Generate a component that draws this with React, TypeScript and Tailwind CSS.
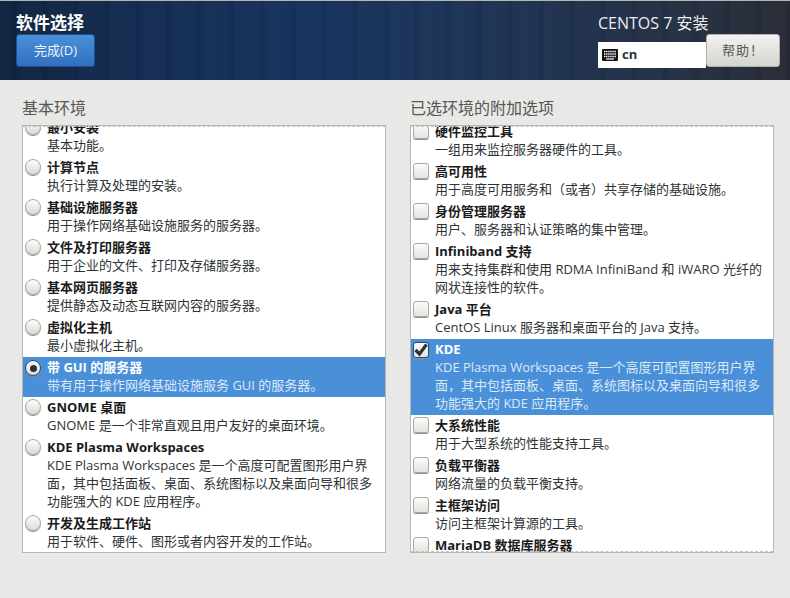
const font = { fontFamily: '"Open Sans", "Noto Sans CJK SC", sans-serif' };

type Item = { title: string; desc: string[]; selected?: boolean };

const environments: Item[] = [
  { title: '最小安装', desc: ['基本功能。'] },
  { title: '计算节点', desc: ['执行计算及处理的安装。'] },
  { title: '基础设施服务器', desc: ['用于操作网络基础设施服务的服务器。'] },
  { title: '文件及打印服务器', desc: ['用于企业的文件、打印及存储服务器。'] },
  { title: '基本网页服务器', desc: ['提供静态及动态互联网内容的服务器。'] },
  { title: '虚拟化主机', desc: ['最小虚拟化主机。'] },
  { title: '带 GUI 的服务器', desc: ['带有用于操作网络基础设施服务 GUI 的服务器。'], selected: true },
  { title: 'GNOME 桌面', desc: ['GNOME 是一个非常直观且用户友好的桌面环境。'] },
  {
    title: 'KDE Plasma Workspaces',
    desc: ['KDE Plasma Workspaces 是一个高度可配置图形用户界', '面，其中包括面板、桌面、系统图标以及桌面向导和很多', '功能强大的 KDE 应用程序。'],
  },
  { title: '开发及生成工作站', desc: ['用于软件、硬件、图形或者内容开发的工作站。'] },
];

const addons: Item[] = [
  { title: '硬件监控工具', desc: ['一组用来监控服务器硬件的工具。'] },
  { title: '高可用性', desc: ['用于高度可用服务和（或者）共享存储的基础设施。'] },
  { title: '身份管理服务器', desc: ['用户、服务器和认证策略的集中管理。'] },
  {
    title: 'Infiniband 支持',
    desc: ['用来支持集群和使用 RDMA InfiniBand 和 iWARO 光纤的', '网状连接性的软件。'],
  },
  { title: 'Java 平台', desc: ['CentOS Linux 服务器和桌面平台的 Java 支持。'] },
  {
    title: 'KDE',
    desc: ['KDE Plasma Workspaces 是一个高度可配置图形用户界', '面，其中包括面板、桌面、系统图标以及桌面向导和很多', '功能强大的 KDE 应用程序。'],
    selected: true,
  },
  { title: '大系统性能', desc: ['用于大型系统的性能支持工具。'] },
  { title: '负载平衡器', desc: ['网络流量的负载平衡支持。'] },
  { title: '主框架访问', desc: ['访问主框架计算源的工具。'] },
  { title: 'MariaDB 数据库服务器', desc: ['MariaDB SQL 数据库服务器，以及相关支持软件包。'] },
];

function Radio({ on }: { on?: boolean }) {
  return (
    <span
      className={`flex h-[16px] w-[16px] shrink-0 items-center justify-center rounded-full border bg-gradient-to-b from-[#fbfbfa] to-[#dcdcd8] shadow-[0_1px_0_#8f8f8b] ${
        on ? 'mt-[2px] border-[#2b4a70]' : 'mt-[1px] border-[#a8a8a4]'
      }`}
    >
      {on && <span className="h-[7px] w-[7px] rounded-full bg-[#2e3436]" />}
    </span>
  );
}

function Check({ on }: { on?: boolean }) {
  return (
    <span
      className={`flex h-[16px] w-[16px] shrink-0 items-center justify-center rounded-[3px] border bg-gradient-to-b from-[#fbfbfa] to-[#e4e4e0] shadow-[0_1px_0_#8f8f8b] ${
        on ? 'mt-[2px] border-[#2b4a70]' : 'mt-[1px] border-[#a8a8a4]'
      }`}
    >
      {on && (
        <svg viewBox="0 0 16 16" className="h-[16px] w-[16px] shrink-0">
          <path d="M2.5 8 L6.5 12 L13.5 2.5" fill="none" stroke="#2e3436" strokeWidth="3.2" />
        </svg>
      )}
    </span>
  );
}

function Row({ item, kind }: { item: Item; kind: 'radio' | 'check' }) {
  return (
    <div className={`flex gap-[6px] pb-[3px] pl-[2px] pt-[1px] ${item.selected ? 'bg-[#4a90d9] text-white' : 'text-[#2e3436]'}`}>
      {kind === 'radio' ? <Radio on={item.selected} /> : <Check on={item.selected} />}
      <div className="min-w-0">
        <div className={`whitespace-nowrap text-[13px] font-bold leading-[18px] ${item.selected ? '' : 'text-[#1a1a1a]'}`}>{item.title}</div>
        {item.desc.map((d) => (
          <div key={d} className={`whitespace-nowrap text-[13px] leading-[18px] ${item.selected ? 'text-[#dbe9f7]' : ''}`}>
            {d}
          </div>
        ))}
      </div>
    </div>
  );
}

function Panel({ label, items, kind, offset, bottomDash }: { label: string; items: Item[]; kind: 'radio' | 'check'; offset: string; bottomDash?: boolean }) {
  return (
    <section className="flex w-[364px] flex-col">
      <h2 className="mb-[7px] h-[20px] text-[16px] leading-[20px] text-[#555753]">{label}</h2>
      <div className="relative h-[428px] overflow-hidden border border-[#b6b6b3] bg-white">
        <div className={offset}>
          {items.map((it) => (
            <Row key={it.title} item={it} kind={kind} />
          ))}
        </div>
        <div className="absolute left-0 right-0 top-0 border-t border-dashed border-[#c4c4c0]" />
        {bottomDash && <div className="absolute bottom-0 left-0 right-0 border-t border-dashed border-[#c4c4c0]" />}
      </div>
    </section>
  );
}

function KeyboardIcon() {
  return (
    <svg viewBox="0 0 16 12" className="h-[12px] w-[16px]">
      <rect x="0" y="0" width="16" height="12" rx="1" fill="#111" />
      <path d="M2 2.5h12M2 5h12M2 7.5h12" stroke="#fff" strokeWidth="1.3" strokeDasharray="1.4 0.7" />
      <path d="M4 10h8" stroke="#fff" strokeWidth="1.2" />
    </svg>
  );
}

export default function App() {
  return (
    <div className="flex h-[598px] w-[790px] flex-col overflow-hidden bg-[#e8e8e6]" style={font}>
      {/* Header */}
      <header className="flex h-[80px] shrink-0 justify-between border-t border-[#b5b5ae] bg-[repeating-linear-gradient(90deg,rgba(255,255,255,0.01)_0px,rgba(255,255,255,0.01)_11px,rgba(0,0,0,0.025)_11px,rgba(0,0,0,0.025)_17px,rgba(255,255,255,0.015)_17px,rgba(255,255,255,0.015)_31px),linear-gradient(90deg,#10233f_0%,#132b50_15%,#16325d_40%,#1b3357_55%,#1f3250_68%,#243044_85%,#272c36_100%)] pl-[16px] pr-[10px]">
        <div>
          <h1 className="mt-[11px] text-[17px] font-bold leading-[22px] text-white">软件选择</h1>
          <button className="h-[33px] w-[79px] rounded-[3px] border border-[#1f4f8f] bg-gradient-to-b from-[#4a90d9] to-[#2f70c0] text-[13px] text-[#eef4fb]">
            完成(D)
          </button>
        </div>
        <div className="flex flex-col items-start">
          <div className="mt-[11px] h-[22px] text-[16px] leading-[22px] text-[#eeeeec]">CENTOS 7 安装</div>
          <div className="flex items-end">
            <div className="mb-[-1px] flex h-[26px] w-[108px] items-center gap-[4px] bg-white pl-[4px]">
              <KeyboardIcon />
              <span className="text-[13px] font-bold text-[#2e3436]">cn</span>
            </div>
            <button className="h-[33px] w-[74px] rounded-[3px] border border-[#b0b0ac] bg-gradient-to-b from-[#f2f2f0] to-[#d4d4d0] text-[13px] tracking-[1px] text-[#555753]">
              帮助！
            </button>
          </div>
        </div>
      </header>

      {/* Main Content */}
      <main className="flex gap-[24px] pl-[22px] pt-[18px]">
        <Panel label="基本环境" items={environments} kind="radio" offset="-mt-[9px]" />
        <Panel label="已选环境的附加选项" items={addons} kind="check" offset="-mt-[5px]" bottomDash />
      </main>
    </div>
  );
}
